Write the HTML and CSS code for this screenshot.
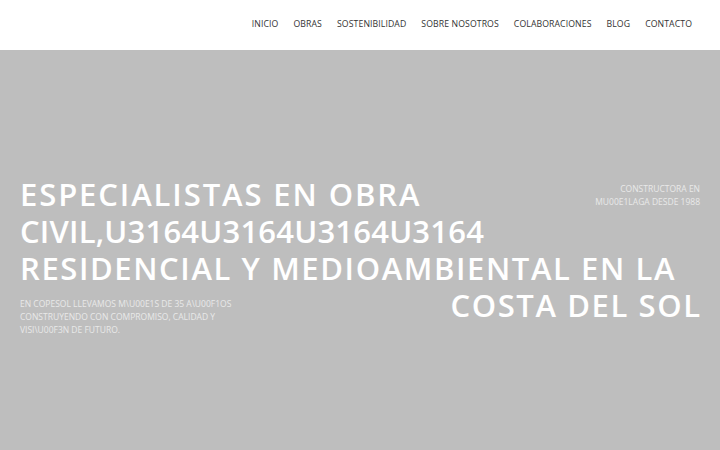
FILE: index.html
```html
<!DOCTYPE html>
<html lang="es">
<head>
<meta charset="utf-8">
<title>Copesol</title>
<link rel="stylesheet" href="styles.css">
</head>
<body>
<header class="site-header">
  <nav class="main-nav">
    <a href="#">INICIO</a>
    <a href="#">OBRAS</a>
    <a href="#">SOSTENIBILIDAD</a>
    <a href="#">SOBRE NOSOTROS</a>
    <a href="#">COLABORACIONES</a>
    <a href="#">BLOG</a>
    <a href="#">CONTACTO</a>
  </nav>
</header>
<section class="hero">
  <div class="hero-inner">
    <div class="title-top">
      <p class="tagline">CONSTRUCTORA EN<br>MU00E1LAGA DESDE 1988</p>
      <h1 class="title">
        <span class="line line-wide">ESPECIALISTAS EN OBRA</span>
        <span class="line line-num">CIVIL,U3164U3164U3164U3164</span>
        <span class="line">RESIDENCIAL Y MEDIOAMBIENTAL EN LA</span>
      </h1>
    </div>
    <div class="bottom-row">
      <p class="lead">EN COPESOL LLEVAMOS M\U00E1S DE 35 A\U00F1OS CONSTRUYENDO CON COMPROMISO, CALIDAD Y VISI\U00F3N DE FUTURO.</p>
      <span class="title title-end">COSTA DEL SOL</span>
    </div>
  </div>
</section>
</body>
</html>
```
FILE: styles.css
```css
* { box-sizing: border-box; }
html, body { margin: 0; padding: 0; }
body {
  width: 720px;
  height: 450px;
  overflow: hidden;
  font-family: "Open Sans", "DejaVu Sans", sans-serif;
  background: #bebebe;
}
.site-header {
  height: 50px;
  background: #ffffff;
  display: flex;
  align-items: center;
  justify-content: flex-end;
  padding: 0 28px 2px 0;
}
.main-nav {
  display: flex;
  gap: 15px;
}
.main-nav a {
  color: #333333;
  text-decoration: none;
  font-size: 8.7px;
  font-weight: 500;
  letter-spacing: 0.1px;
}
.hero {
  height: 400px;
  display: flex;
  flex-direction: column;
  justify-content: center;
  padding: 12px 20px 0 20px;
}
.hero-inner { display: flex; flex-direction: column; }
.title-top { display: flow-root; }
.tagline {
  float: right;
  margin: 6px 0 0 0;
  text-align: right;
  color: #e9e9e9;
  font-size: 8.5px;
  line-height: 13px;
}
.title {
  margin: 0;
  color: #ffffff;
  font-size: 31px;
  font-weight: 600;
  line-height: 37px;
  letter-spacing: 1.6px;
}
.title .line { display: block; }
.title .line-wide { letter-spacing: 1.9px; }
.title .line-num { letter-spacing: 0.2px; }
.bottom-row {
  display: flex;
  justify-content: space-between;
  align-items: flex-start;
}
.lead {
  margin: 10px 0 0 0;
  width: 230px;
  color: #e9e9e9;
  font-size: 8.5px;
  line-height: 13px;
}
.title-end { display: block; margin-right: -1.6px; }
```
